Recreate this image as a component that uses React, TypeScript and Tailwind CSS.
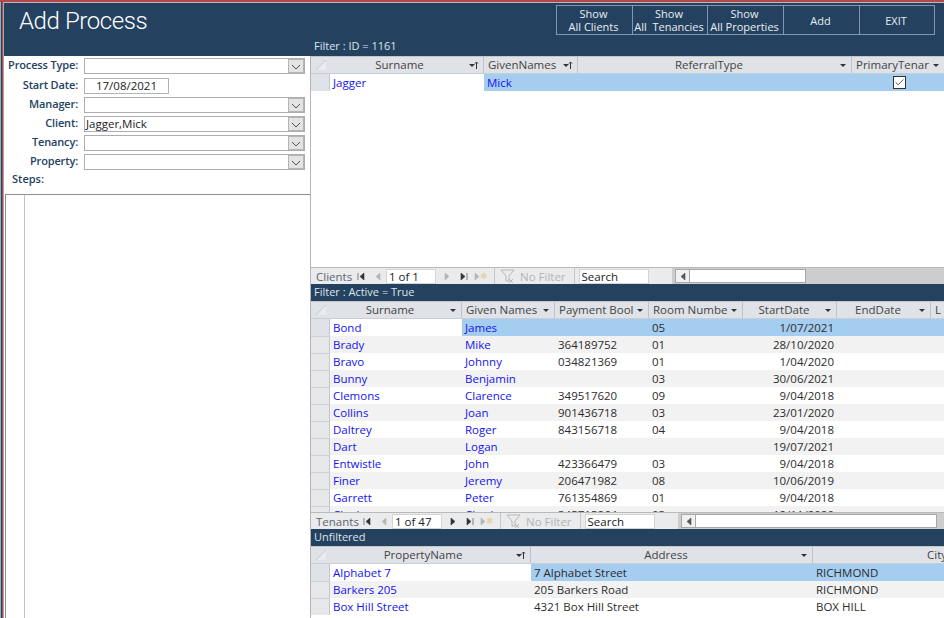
import React from "react";
import { Check } from "lucide-react";

const FONT = "font-['Open_Sans','Noto_Sans',sans-serif]";

interface Column {
  title: string;
  width: number;
  sorted?: boolean;
  align?: "right";
  left?: boolean;
}

type Row = string[];

const clientCols: Column[] = [
  { title: "Surname", width: 154, sorted: true },
  { title: "GivenNames", width: 94, sorted: true, left: true },
  { title: "ReferralType", width: 274 },
  { title: "PrimaryTenar", width: 93, left: true },
];

const tenantCols: Column[] = [
  { title: "Surname", width: 132 },
  { title: "Given Names", width: 93, left: true },
  { title: "Payment Bool", width: 94, left: true },
  { title: "Room Numbe", width: 94, left: true },
  { title: "StartDate", width: 94, align: "right" },
  { title: "EndDate", width: 94 },
  { title: "L", width: 60, left: true },
];

const tenants: Row[] = [
  ["Bond", "James", "", "05", "1/07/2021", "", ""],
  ["Brady", "Mike", "364189752", "01", "28/10/2020", "", ""],
  ["Bravo", "Johnny", "034821369", "01", "1/04/2020", "", ""],
  ["Bunny", "Benjamin", "", "03", "30/06/2021", "", ""],
  ["Clemons", "Clarence", "349517620", "09", "9/04/2018", "", ""],
  ["Collins", "Joan", "901436718", "03", "23/01/2020", "", ""],
  ["Daltrey", "Roger", "843156718", "04", "9/04/2018", "", ""],
  ["Dart", "Logan", "", "", "19/07/2021", "", ""],
  ["Entwistle", "John", "423366479", "03", "9/04/2018", "", ""],
  ["Finer", "Jeremy", "206471982", "08", "10/06/2019", "", ""],
  ["Garrett", "Peter", "761354869", "01", "9/04/2018", "", ""],
  ["Cloak", "Charles", "345715264", "03", "12/11/2020", "", ""],
];

const propertyCols: Column[] = [
  { title: "PropertyName", width: 201, sorted: true },
  { title: "Address", width: 282 },
  { title: "City", width: 260 },
];

const properties: Row[] = [
  ["Alphabet 7", "7 Alphabet Street", "RICHMOND"],
  ["Barkers 205", "205 Barkers Road", "RICHMOND"],
  ["Box Hill Street", "4321 Box Hill Street", "BOX HILL"],
];

function SortMark({ sorted }: { sorted?: boolean }) {
  if (sorted) {
    return (
      <svg width="11" height="9" viewBox="0 0 11 9" className="shrink-0">
        <path d="M1 3h6L4 6z" fill="#333" />
        <path d="M8.5 8V1M7 2.5L8.5 1 10 2.5" stroke="#333" fill="none" />
      </svg>
    );
  }
  return (
    <svg width="8" height="9" viewBox="0 0 8 9" className="shrink-0">
      <path d="M1 3h6L4 6z" fill="#333" />
    </svg>
  );
}

function DataGrid({
  columns,
  rows,
  blueCols = 2,
}: {
  columns: Column[];
  rows: Row[];
  blueCols?: number;
}) {
  return (
    <div className="flex-1 min-h-0 overflow-hidden bg-white">
      <div className="flex h-[18px] bg-[#dfe2e6] border-b border-[#c9ced6] border-t border-t-[#c6c6c6]">
        <div className="w-[19px] shrink-0 relative">
          <svg width="12" height="12" viewBox="0 0 12 12" className="absolute left-[4px] top-[2px]">
            <path d="M1 11L11 1V11Z" fill="#e9ebee" />
            <path d="M1 11L11 1" stroke="#c5cad1" />
          </svg>
        </div>
        {columns.map((c) => (
          <div
            key={c.title}
            style={{ width: c.width }}
            className="shrink-0 flex items-center border-r border-[#bfc3c9] pr-[4px] pl-[4px] text-[11.5px] text-[#444]"
          >
            <span className={`flex-1 whitespace-nowrap overflow-hidden ${c.left ? "" : "text-center pr-[3px]"}`}>
              {c.title}
            </span>
            <SortMark sorted={c.sorted} />
          </div>
        ))}
      </div>
      {rows.map((row, r) => (
        <div key={r} className={`flex h-[17px] ${r % 2 ? "bg-[#f2f2f2]" : "bg-white"}`}>
          <div className={`w-[19px] shrink-0 border-r border-[#c4c8ce] ${r === 0 ? "bg-[#dfe2e6]" : "bg-[#e6e7e9] border-t border-t-[#cdd0d4]"}`} />
          {columns.map((c, i) => (
            <div
              key={c.title}
              style={{ width: c.width }}
              className={`shrink-0 pl-[3px] pr-[3px] text-[11.5px] leading-[17px] whitespace-nowrap overflow-hidden ${
                i < blueCols ? "text-[#1414f0]" : "text-[#2c2c2c]"
              } ${r === 0 && i >= 1 ? "bg-[#a5cdf0]" : ""} ${c.align === "right" ? "text-right" : ""}`}
            >
              {row[i]}
            </div>
          ))}
        </div>
      ))}
    </div>
  );
}

function NavIcon({ d, color, className = "" }: { d: string; color: string; className?: string }) {
  return (
    <svg width="9" height="9" viewBox="0 0 9 9" className={`shrink-0 ${className}`}>
      <path d={d} fill={color} stroke={color} strokeWidth="0.6" />
    </svg>
  );
}

function NavBar({
  label,
  labelWidth,
  record,
  thumb,
  canNext,
}: {
  label: string;
  labelWidth: number;
  record: string;
  thumb: number;
  canNext?: boolean;
}) {
  return (
    <div className="h-[17px] shrink-0 flex items-stretch bg-[#cdcdcd] border-t border-[#b9b9b9] text-[11.5px] leading-[16px] overflow-hidden">
      <div className="flex items-center bg-[#eaebed] pl-[5px] pr-[23px]">
        <span style={{ width: labelWidth }} className="text-[#5c6570] pt-px shrink-0">{label}</span>
        <NavIcon d="M1 1v7M7 1L3 4.5 7 8z" color="#333" />
        <NavIcon d="M7 1L3 4.5 7 8z" color="#b5b5b5" className="ml-[7px]" />
        <div className="w-[50px] h-[15px] ml-[4px] bg-white border border-[#d4d4d4] pl-[2px] leading-[13px] text-[#222]">{record}</div>
        <NavIcon d="M2 1l4 3.5L2 8z" color={canNext ? "#333" : "#b5b5b5"} className="ml-[7px]" />
        <NavIcon d="M1 1l4 3.5L1 8zM7 1v7" color="#333" className="ml-[8px]" />
        <NavIcon d="M1 1l4 3.5L1 8z" color="#b5b5b5" className="ml-[5px]" />
        <span className="text-[#e8d3a8] text-[9px] -ml-[3px]">✱</span>
        <div className="w-px h-full bg-[#c9c9c9] ml-[6px]" />
        <svg width="16" height="15" viewBox="0 0 16 15" className="ml-[5px] shrink-0">
          <path d="M1 1h13L9 7v5H6V7z" fill="none" stroke="#b8b8b8" />
          <path d="M9 10l4 4M13 10l-4 4" stroke="#b8b8b8" />
        </svg>
        <span className="text-[#b4b4b4] ml-[4px] whitespace-nowrap pt-px">No Filter</span>
        <div className="w-px h-full bg-[#c9c9c9] ml-[8px]" />
        <div className="w-[70px] h-[15px] ml-[4px] bg-white border border-[#d4d4d4] pl-[2px] leading-[13px] text-[#222]">Search</div>
      </div>
      <div className="flex ml-[3px] my-[1px]">
        <div className="w-[15px] flex items-center justify-center bg-[#f0f0f0] border border-[#a8a8a8]">
          <NavIcon d="M7 1L3 4.5 7 8z" color="#555" />
        </div>
        <div style={{ width: thumb }} className="bg-white border border-[#a8a8a8] border-l-0" />
      </div>
    </div>
  );
}

function FilterBar({ text }: { text: string }) {
  return (
    <div className="h-[17px] shrink-0 bg-[#24425f] text-[#dfe5ec] text-[11px] leading-[15px] pl-[3px]">{text}</div>
  );
}

function Combo({ label, value }: { label: string; value?: string }) {
  return (
    <div className="flex items-center h-[19px]">
      <label className="w-[74px] text-right font-semibold text-[11px] tracking-[-0.15px] text-[#24425f] whitespace-nowrap">{label}</label>
      <div className="ml-[6px] w-[221px] h-[16px] flex bg-white border border-[#adadad]">
        <span className="flex-1 text-[11.5px] leading-[14px] pl-[1px] text-[#222]">{value}</span>
        <div className="w-[16px] border border-[#b5b5b5] bg-[#e3e3e3] flex items-center justify-center">
          <svg width="10" height="6" viewBox="0 0 10 6" className="mt-[3px]">
            <path d="M1 1l4 4 4-4" fill="none" stroke="#555" />
          </svg>
        </div>
      </div>
    </div>
  );
}

function HeaderButton({ line1, line2, width }: { line1?: string; line2: string; width: number }) {
  return (
    <button
      style={{ width }}
      className="h-[30px] border border-[#7f97b0] -ml-px pr-[2px] text-[#e8edf2] text-[11px] leading-[13px] text-center whitespace-pre"
    >
      {line1 && <div>{line1}</div>}
      <div>{line2}</div>
    </button>
  );
}

export default function App() {
  return (
    <div className={`${FONT} w-[944px] h-[618px] overflow-hidden flex flex-col bg-white border-t-2 border-t-[#b0484c]`}>
      <div className="flex-1 min-h-0 flex">
        <div className="w-[4px] shrink-0 border-l border-r border-[#a8a8a8] bg-[linear-gradient(90deg,#2d4468_50%,#a8484c_50%)]" />
        <div className="flex-1 min-w-0 flex flex-col">
          <header className="h-[54px] shrink-0 flex bg-[#24425f] border-t border-t-[#c4b4b6]">
            <div className="w-[307px] shrink-0 pl-[15px] text-white font-['Roboto',sans-serif] font-light tracking-[-0.4px] text-[24px] leading-[36px]">Add Process</div>
            <div className="flex-1 flex flex-col">
              <div className="flex justify-end pr-[9px] pt-[2px]">
                <HeaderButton line1="Show" line2="All Clients" width={77} />
                <HeaderButton line1="Show" line2="All  Tenancies" width={76} />
                <HeaderButton line1="Show" line2="All Properties" width={77} />
                <HeaderButton line2="Add" width={77} />
                <HeaderButton line2="EXIT" width={76} />
              </div>
              <div className="text-[#dfe5ec] text-[11px] leading-[17px] mt-[2px] pl-[3px] whitespace-pre">Filter : ID = 1161</div>
            </div>
          </header>

          <div className="flex-1 min-h-0 flex">
            <aside className="w-[307px] shrink-0 flex flex-col border-r border-[#b5b5b5]">
              <div className="flex flex-col">
                <Combo label="Process Type:" />
                <div className="flex items-center h-[19px] mt-[1px]">
                  <label className="w-[74px] text-right font-semibold text-[11px] tracking-[-0.15px] text-[#24425f]">Start Date:</label>
                  <div className="ml-[6px] w-[85px] h-[16px] bg-white border border-[#b3b3b3] text-[11.5px] leading-[14px] text-center text-[#222]">
                    17/08/2021
                  </div>
                </div>
                <Combo label="Manager:" />
                <Combo label="Client:" value="Jagger,Mick" />
                <Combo label="Tenancy:" />
                <Combo label="Property:" />
                <div className="pl-[8px] font-semibold text-[11px] leading-[15px] text-[#24425f]">Steps:</div>
              </div>
              <div className="flex-1 ml-[1px] mt-[8px] flex border-t border-l border-[#8f8f8f]">
                <div className="w-[19px] border-r border-[#c4c4c4]" />
              </div>
            </aside>

            <main className="flex-1 min-w-0 flex flex-col">
              <section className="h-[228px] shrink-0 flex flex-col">
                <div className="flex-1 min-h-0 overflow-hidden flex flex-col relative">
                  <DataGrid columns={clientCols} rows={[["Jagger", "Mick", "", ""]]} />
                  <div className="absolute right-[38px] top-[20px] w-[13px] h-[13px] bg-white border border-[#333] flex items-center justify-center">
                    <Check size={11} color="#444" strokeWidth={2} />
                  </div>
                </div>
                <NavBar label="Clients" labelWidth={41} record="1 of 1" thumb={116} />
              </section>
              <FilterBar text="Filter : Active = True" />
              <section className="h-[228px] shrink-0 flex flex-col">
                <DataGrid columns={tenantCols} rows={tenants} />
                <NavBar label="Tenants" labelWidth={47} record="1 of 47" thumb={241} canNext />
              </section>
              <FilterBar text="Unfiltered" />
              <section className="flex-1 min-h-0 flex flex-col">
                <DataGrid columns={propertyCols} rows={properties} blueCols={1} />
              </section>
            </main>
          </div>
        </div>
      </div>
    </div>
  );
}
